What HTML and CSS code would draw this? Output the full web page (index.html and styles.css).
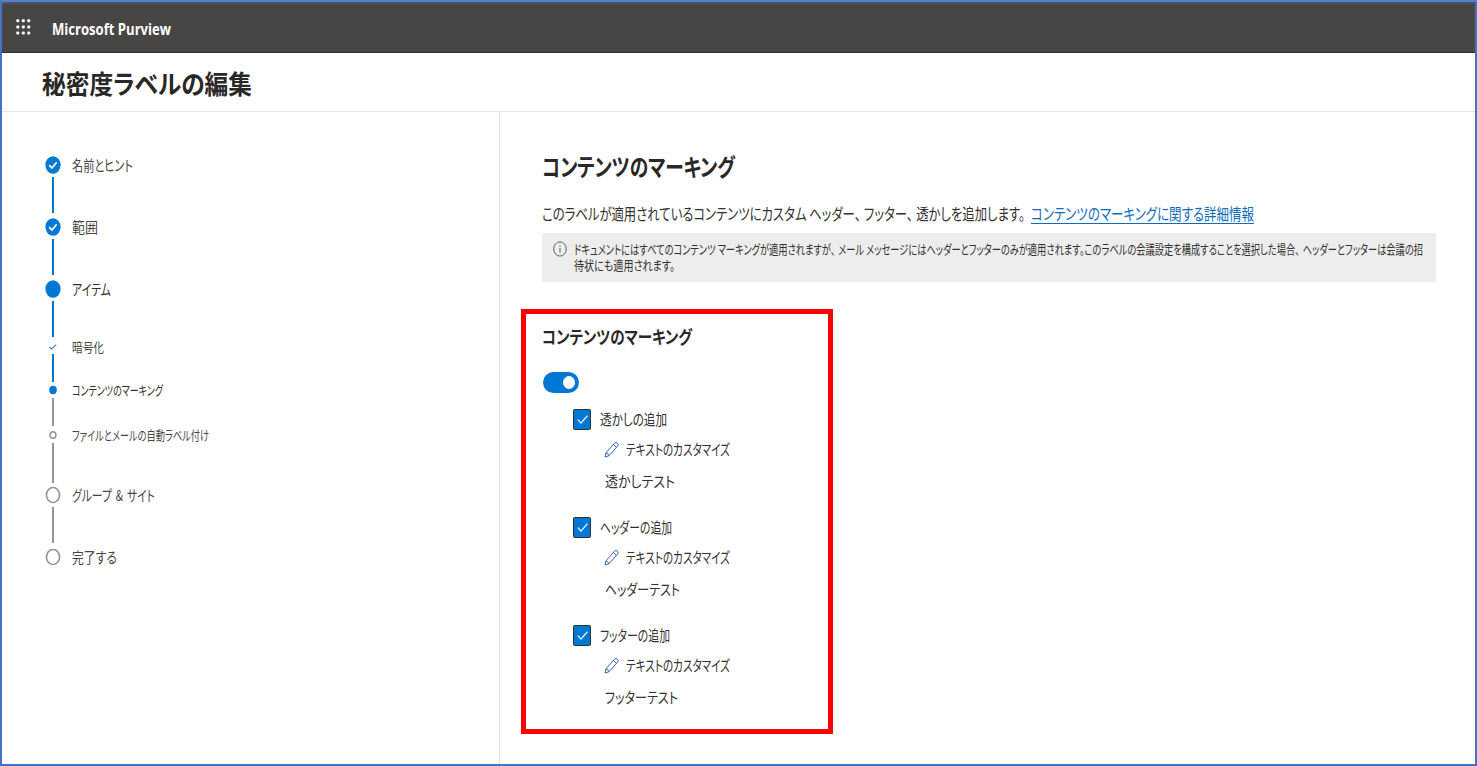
FILE: index.html
```html
<!DOCTYPE html>
<html lang="ja">
<head>
<meta charset="utf-8">
<title>Microsoft Purview</title>
<link rel="stylesheet" href="styles.css">
</head>
<body>
<svg class="defs" width="0" height="0">
  <symbol id="done" viewBox="0 0 16 18"><ellipse cx="8" cy="9" rx="7.6" ry="8.7" fill="#0078d4"/><path d="M4.2 9.2 6.9 12 11.7 6.2" fill="none" stroke="#fff" stroke-width="1.7"/></symbol>
  <symbol id="current" viewBox="0 0 16 18"><ellipse cx="8" cy="9" rx="7.6" ry="8.7" fill="#0078d4"/></symbol>
  <symbol id="todo" viewBox="0 0 16 18"><ellipse cx="8" cy="9" rx="6.6" ry="7.5" fill="#fff" stroke="#979593" stroke-width="1.7"/></symbol>
  <symbol id="sub-done" viewBox="0 0 16 18"><path d="M4.2 8.8 6.6 11 11.2 6.6" fill="none" stroke="#2b88d8" stroke-width="1.1"/></symbol>
  <symbol id="sub-current" viewBox="0 0 16 18"><ellipse cx="8" cy="9" rx="3.8" ry="4.2" fill="#0078d4"/></symbol>
  <symbol id="sub-todo" viewBox="0 0 16 18"><ellipse cx="8" cy="9" rx="2.9" ry="3.3" fill="#fff" stroke="#979593" stroke-width="1.5"/></symbol>
  <symbol id="check" viewBox="0 0 18 21"><rect x=".5" y=".5" width="17" height="20" rx="1" fill="#0078d4" stroke="#323130"/><path d="M4.8 10.6 8 14.2 14.4 6.6" fill="none" stroke="#fff" stroke-width="1.2"/></symbol>
  <symbol id="pencil" viewBox="0 0 15 17"><path d="M1 16 2 11.7 10.6 2.1Q12 .7 13.4 2.1T13.6 5.2L4.9 14.8ZM2 11.7Q4.2 12.3 4.9 14.8M9.5 3.3 12.4 6.5" fill="none" stroke="#3568bd" stroke-width="1"/></symbol>
</svg>
<div class="app">
  <header class="topbar">
    <svg class="waffle" width="15" height="17" viewBox="0 0 15 17" fill="#fff"><rect x="0.3" y="0.3" width="3" height="3" rx="1"/><rect x="5.8" y="0.3" width="3" height="3" rx="1"/><rect x="11.2" y="0.3" width="3" height="3" rx="1"/><rect x="0.3" y="6.5" width="3" height="3" rx="1"/><rect x="5.8" y="6.5" width="3" height="3" rx="1"/><rect x="11.2" y="6.5" width="3" height="3" rx="1"/><rect x="0.3" y="12.6" width="3" height="3" rx="1"/><rect x="5.8" y="12.6" width="3" height="3" rx="1"/><rect x="11.2" y="12.6" width="3" height="3" rx="1"/></svg>
    <span class="brand" data-w="119">Microsoft Purview</span>
  </header>
  <div class="titlebar"><h1 data-w="210">秘密度ラベルの編集</h1></div>
  <div class="body">
    <ol class="steps">
      <li class="step"><svg class="mark"><use href="#done"/></svg><span data-w="61">名前とヒント</span><i class="line"></i></li>
      <li class="step"><svg class="mark"><use href="#done"/></svg><span data-w="26">範囲</span><i class="line"></i></li>
      <li class="step now"><svg class="mark"><use href="#current"/></svg><span data-w="39">アイテム</span><i class="line"></i></li>
      <li class="step sub enc"><svg class="mark"><use href="#sub-done"/></svg><span data-w="32">暗号化</span><i class="line"></i></li>
      <li class="step sub now cur"><svg class="mark"><use href="#sub-current"/></svg><span data-w="91">コンテンツのマーキング</span><i class="line gray"></i></li>
      <li class="step sub auto"><svg class="mark"><use href="#sub-todo"/></svg><span data-w="137">ファイルとメールの自動ラベル付け</span><i class="line gray"></i></li>
      <li class="step"><svg class="mark"><use href="#todo"/></svg><span class="group" data-w="83">グループ &amp; サイト</span><i class="line gray"></i></li>
      <li class="step"><svg class="mark"><use href="#todo"/></svg><span data-w="45">完了する</span></li>
    </ol>
    <main class="content">
      <h2><span data-w="193">コンテンツのマーキング</span></h2>
      <p class="lead"><span data-w="483">このラベルが適用されているコンテンツにカスタム ヘッダー<b class="comma">、</b>フッター<b class="comma">、</b>透かしを追加します。</span><a data-w="223">コンテンツのマーキングに関する詳細情報</a></p>
      <div class="info">
        <svg width="14" height="16" viewBox="0 0 14 16"><ellipse cx="7" cy="8" rx="6.3" ry="7.1" fill="none" stroke="#605e5c"/><path d="M7 6.7V11.5M7 4.2V5.5" stroke="#605e5c"/></svg>
        <div class="info-text">
          <div><span data-w="849">ドキュメントにはすべてのコンテンツ マーキングが適用されますが<b class="comma">、</b>メール メッセージにはヘッダーとフッターのみが適用されます。このラベルの会議設定を構成することを選択した場合<b class="comma">、</b>ヘッダーとフッターは会議の招</span></div>
          <div><span data-w="101">待状にも適用されます。</span></div>
        </div>
      </div>
      <section class="marking">
        <h3><span data-w="150">コンテンツのマーキング</span></h3>
        <div class="toggle"><i class="knob"></i></div>
        <div class="option">
          <div class="opt-head"><svg width="18" height="21"><use href="#check"/></svg><span data-w="67">透かしの追加</span></div>
          <div class="customize"><svg width="15" height="17"><use href="#pencil"/></svg><span data-w="104">テキストのカスタマイズ</span></div>
          <div class="value"><span data-w="70">透かしテスト</span></div>
        </div>
        <div class="option">
          <div class="opt-head"><svg width="18" height="21"><use href="#check"/></svg><span data-w="72">ヘッダーの追加</span></div>
          <div class="customize"><svg width="15" height="17"><use href="#pencil"/></svg><span data-w="104">テキストのカスタマイズ</span></div>
          <div class="value"><span data-w="75">ヘッダーテスト</span></div>
        </div>
        <div class="option">
          <div class="opt-head"><svg width="18" height="21"><use href="#check"/></svg><span data-w="70">フッターの追加</span></div>
          <div class="customize"><svg width="15" height="17"><use href="#pencil"/></svg><span data-w="104">テキストのカスタマイズ</span></div>
          <div class="value"><span data-w="73">フッターテスト</span></div>
        </div>
      </section>
    </main>
  </div>
  <div class="highlight"></div>
</div>
<script src="fit.js"></script>
</body>
</html>
```
FILE: styles.css
```css
* { box-sizing: border-box; }
body { margin: 0; font-family: "Noto Sans CJK JP", sans-serif; font-feature-settings: "palt"; color: #323130; background: #fff; }
h1, h2, h3, p, ol { margin: 0; padding: 0; }
.defs { position: absolute; }
[data-w] { display: inline-block; white-space: nowrap; transform-origin: 0 50%; }
.comma { font-weight: 400; margin-right: 4px; }
.app { position: relative; width: 1477px; height: 766px; border: 2px solid #4472c4; border-top-color: #5580cb; overflow: hidden; display: flex; flex-direction: column; }
.topbar { height: 51px; flex: none; background: #484644; border-top: 2px solid #47536a; border-bottom: 1px solid #33302f; display: flex; align-items: center; padding: 2px 0 0 14px; }
.waffle { margin-top: -4px; }
.brand { margin-left: 21px; color: #fff; font: 700 15.5px/24px "Open Sans", sans-serif; }
.titlebar { height: 59px; flex: none; border-bottom: 1px solid #e6e6e6; padding: 2px 0 0 40px; display: flex; align-items: center; }
h1 { font-size: 26px; line-height: 36px; font-weight: 700; color: #292827; }
.body { flex: 1; display: flex; min-height: 0; }
.steps { width: 498px; flex: none; border-right: 1px solid #e1e1e1; padding: 41px 0 0 43px; list-style: none; }
.step { display: grid; grid-template-columns: 16px 1fr; grid-template-rows: 24px 36px; column-gap: 11px; height: 61.8px; align-items: center; font-size: 15px; line-height: 24px; color: #484644; }
.step.now { color: #323130; }
.group { word-spacing: 2px; }
.mark { width: 16px; height: 18px; }
.line { width: 2px; height: 100%; margin-left: 7px; background: #0078d4; }
.line.gray { background: #979593; }
.sub { grid-template-rows: 14px 28px; font-size: 13px; line-height: 14px; }
.enc { height: 42px; margin-top: 2px; }
.cur { height: 45px; grid-template-rows: 16px 28px; }
.auto { height: 56px; grid-template-rows: 16px 40px; }
.content { flex: 1; padding: 35px 38px 0 42px; }
h2 { height: 38px; font-size: 24px; line-height: 37px; font-weight: 700; color: #292827; }
.lead { display: flex; gap: 6px; margin-top: 15px; height: 26px; font-size: 16px; line-height: 26px; }
.lead a { color: #0f6cbd; text-decoration: underline; text-underline-offset: 3px; text-decoration-thickness: 1px; }
.info { width: 894px; height: 49px; margin-top: 7px; background: #ededed; padding: 8px 11px; display: flex; gap: 7px; }
.info svg { flex: none; }
.info-text { font-size: 13px; line-height: 16px; }
.info-text div { height: 16px; }
.marking { padding-top: 38px; }
h3 { height: 32px; font-size: 18px; line-height: 32px; font-weight: 700; color: #292827; }
.toggle { width: 36px; height: 21px; margin: 20px 0 15px 1px; border-radius: 10.5px; background: #0078d4; display: flex; align-items: center; justify-content: flex-end; padding-right: 4px; }
.knob { width: 12px; height: 13px; border-radius: 50%; background: #fff; }
.option { height: 108px; padding-left: 31px; font-size: 15px; line-height: 24px; }
.opt-head { display: flex; align-items: center; height: 22px; gap: 8.5px; }
.customize { display: flex; align-items: center; gap: 7px; padding-left: 31px; height: 38px; }
.value { padding: 1px 0 0 32px; }
.highlight { position: absolute; left: 519px; top: 307px; width: 312px; height: 425px; border: 5px solid #f00; }
```
FILE: fit.js
```js
// Condense each label horizontally to its designed width.
document.querySelectorAll('[data-w]').forEach(function (el) {
  var target = Number(el.dataset.w);
  if (getComputedStyle(el.parentElement).display === 'grid') {
    el.style.justifySelf = 'start';
  }
  var natural = el.getBoundingClientRect().width;
  el.style.transform = 'scaleX(' + target / natural + ')';
  el.style.marginRight = (target - natural) + 'px';
});
```
